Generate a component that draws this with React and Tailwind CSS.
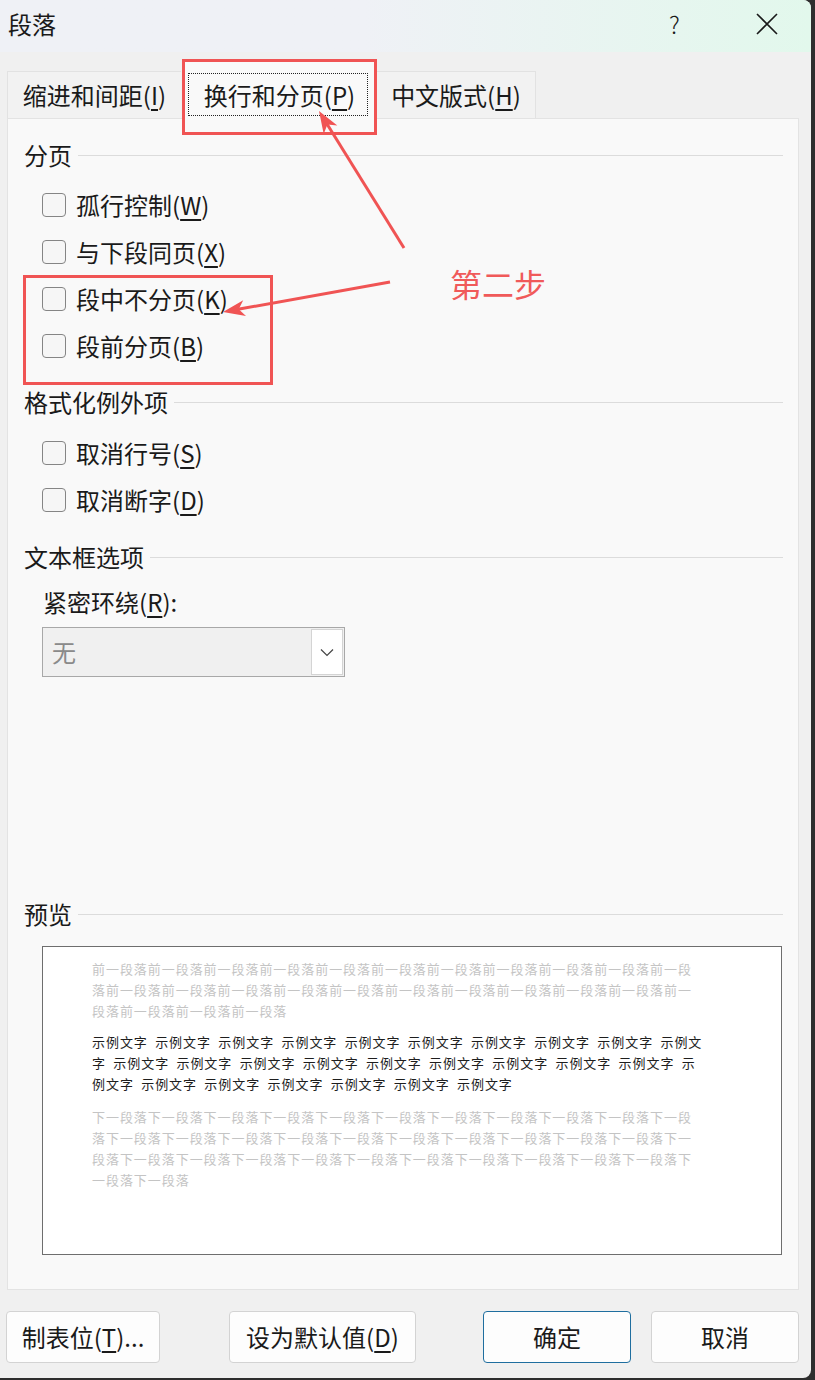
import React from "react";

const F = "font-['Noto_Sans_CJK_SC',sans-serif]";

function U({ children }) {
  return <span className="underline underline-offset-[4px] decoration-[1.5px]">{children}</span>;
}

function Heading({ children }) {
  return (
    <div className="h-[42px] flex items-center gap-[6px] text-[24px] leading-[42px] text-[#1a1a1a]">
      <span>{children}</span>
      <div className="flex-1 h-px bg-[#dcdcdc]" />
    </div>
  );
}

function Check({ label, k }) {
  return (
    <div className="h-[47px] flex items-center pl-[18px]">
      <div className="w-[24px] h-[24px] rounded-[4px] border-[1.5px] border-[#858585] bg-[#f6f6f6]" />
      <span className="ml-[10px] text-[24px] leading-[32px] text-[#1a1a1a]">
        {label}(<U>{k}</U>)
      </span>
    </div>
  );
}

export default function App() {
  const L1 = "前一段落".repeat(10) + "前一段";
  const L2 = "落" + "前一段落".repeat(10) + "前一";
  const L3 = "段落" + "前一段落".repeat(3);
  const S1 = "示例文字 ".repeat(9) + "示例文";
  const S2 = "字 " + "示例文字 ".repeat(9) + "示";
  const S3 = "例文字 " + "示例文字 ".repeat(5) + "示例文字";
  const N1 = "下一段落".repeat(10) + "下一段";
  const N2 = "落" + "下一段落".repeat(10) + "下一";
  const N3 = "段落" + "下一段落".repeat(10) + "下";
  const N4 = "一段落下一段落";

  const lineCls = "h-[21px] leading-[21px] whitespace-pre text-[13px] tracking-[0.95px] [word-spacing:3.5px]";

  return (
    <div className={`w-[815px] h-[1380px] bg-[#2e2e2e] overflow-hidden ${F}`}>
      <div className="relative w-[811px] h-[1378px] bg-[#f0f0f0] rounded-tr-[8px] rounded-br-[8px] overflow-hidden flex flex-col">
        {/* Title bar */}
        <div className="h-[52px] shrink-0 flex items-center pb-[4px] bg-linear-to-r from-[#eff1f6] from-45% to-[#e2f8ec]">
          <span className="pl-[8px] text-[24px] leading-[32px] text-[#1a1a1a]">段落</span>
          <div className="flex-1" />
          <span className="w-[14px] text-[24px] leading-[32px] text-[#1a1a1a] font-light">?</span>
          <div className="w-[73px]" />
          <svg width="22" height="22" viewBox="0 0 22 22" className="mr-[33px]">
            <path d="M1 1 L21 21 M21 1 L1 21" stroke="#1a1a1a" strokeWidth="1.6" fill="none" />
          </svg>
        </div>

        {/* Tabs */}
        <div className="h-[66px] shrink-0 flex items-end pl-[7px]">
          <div className="w-[174px] h-[47px] flex items-center justify-center border-t border-l border-[#e2e2e2] bg-[#f2f2f2] text-[24px] leading-[32px] text-[#1a1a1a]">
            缩进和间距(<U>I</U>)
          </div>
          <div className="relative z-10 ml-[3px] w-[191px] h-[59px] -mb-px pt-[11px] flex items-center justify-center bg-[#f9f9f9] text-[24px] leading-[32px] text-[#1a1a1a]">
            换行和分页(<U>P</U>)
            <div className="absolute left-[4px] top-[13px] w-[180px] h-[43px] border border-dotted border-[#222]" />
          </div>
          <div className="ml-[2px] w-[159px] h-[47px] flex items-center justify-center border-t border-r border-[#e2e2e2] bg-[#f2f2f2] text-[24px] leading-[32px] text-[#1a1a1a]">
            中文版式(<U>H</U>)
          </div>
        </div>

        {/* Panel */}
        <div className="ml-[7px] w-[792px] h-[1172px] shrink-0 border border-[#e3e3e3] bg-[#f9f9f9] pl-[16px] pr-[15px] pt-[15px] flex flex-col">
          <Heading>分页</Heading>
          <div className="mt-[5px] flex flex-col">
            <Check label="孤行控制" k="W" />
            <Check label="与下段同页" k="X" />
            <Check label="段中不分页" k="K" />
            <Check label="段前分页" k="B" />
          </div>
          <div className="mt-[12px]">
            <Heading>格式化例外项</Heading>
          </div>
          <div className="mt-[6px] flex flex-col">
            <Check label="取消行号" k="S" />
            <Check label="取消断字" k="D" />
          </div>
          <div className="mt-[13px]">
            <Heading>文本框选项</Heading>
          </div>
          <div className="mt-[8px] ml-[19px] h-[32px] text-[24px] leading-[32px] text-[#1a1a1a]">
            紧密环绕(<U>R</U>):
          </div>
          <div className="mt-[9px] ml-[18px] w-[303px] h-[50px] border border-[#a8a8a8] bg-[#f0f0f0] flex items-center">
            <span className="pl-[9px] text-[24px] leading-[32px] text-[#8a8a8a]">无</span>
            <div className="flex-1" />
            <div className="w-[32px] h-[46px] mr-[1px] bg-white border border-[#d4d4d4] flex items-center justify-center">
              <svg width="14" height="9" viewBox="0 0 14 9">
                <path d="M1 1.5 L7 7.5 L13 1.5" stroke="#444" strokeWidth="1.2" fill="none" />
              </svg>
            </div>
          </div>
          <div className="mt-[216px]">
            <Heading>预览</Heading>
          </div>
          <div className="mt-[11px] ml-[18px] w-[740px] h-[309px] border border-[#6e6e6e] bg-white pl-[49px] pt-[11px]">
            <div className="text-[#c4c4c4]">
              <div className={lineCls}>{L1}</div>
              <div className={lineCls}>{L2}</div>
              <div className={lineCls}>{L3}</div>
            </div>
            <div className="mt-[10px] text-[#1e1e1e]">
              <div className={lineCls}>{S1}</div>
              <div className={lineCls}>{S2}</div>
              <div className={lineCls}>{S3}</div>
            </div>
            <div className="mt-[12px] text-[#c4c4c4]">
              <div className={lineCls}>{N1}</div>
              <div className={lineCls}>{N2}</div>
              <div className={lineCls}>{N3}</div>
              <div className={lineCls}>{N4}</div>
            </div>
          </div>
        </div>

        {/* Buttons */}
        <div className="mt-[21px] flex pl-[6px] text-[24px] leading-[32px] text-[#1a1a1a]">
          <div className="w-[154px] h-[52px] rounded-[4px] border border-[#d3d3d3] bg-[#fdfdfd] flex items-center justify-center">
            制表位(<U>T</U>)...
          </div>
          <div className="ml-[69px] w-[187px] h-[52px] rounded-[4px] border border-[#d3d3d3] bg-[#fdfdfd] flex items-center justify-center">
            设为默认值(<U>D</U>)
          </div>
          <div className="ml-[67px] w-[148px] h-[52px] rounded-[4px] border-[1.5px] border-[#1f6e9f] bg-[#fdfdfd] flex items-center justify-center">
            确定
          </div>
          <div className="ml-[20px] w-[148px] h-[52px] rounded-[4px] border border-[#d3d3d3] bg-[#fdfdfd] flex items-center justify-center">
            取消
          </div>
        </div>

        {/* Annotations */}
        <div className="absolute left-[182px] top-[59px] w-[195px] h-[76px] border-[3px] border-[#f05454] pointer-events-none z-20" />
        <div className="absolute left-[23px] top-[275px] w-[250px] h-[110px] border-[3px] border-[#f05454] pointer-events-none z-20" />
        <svg className="absolute left-0 top-0 pointer-events-none z-20" width="811" height="1378" viewBox="0 0 811 1378">
          <line x1="404" y1="248" x2="327" y2="124" stroke="#f05454" strokeWidth="3" />
          <polygon points="319,111 337.3,125.6 327.4,124.6 323.7,134" fill="#f05454" />
          <line x1="390" y1="282" x2="238" y2="309.3" stroke="#f05454" strokeWidth="3" />
          <polygon points="223,312 243.2,300.2 238.7,309.2 246,316" fill="#f05454" />
        </svg>
        <div className="absolute left-[450px] top-[264px] text-[32px] leading-[38px] text-[#f05a5a] z-20">第二步</div>
      </div>
    </div>
  );
}
